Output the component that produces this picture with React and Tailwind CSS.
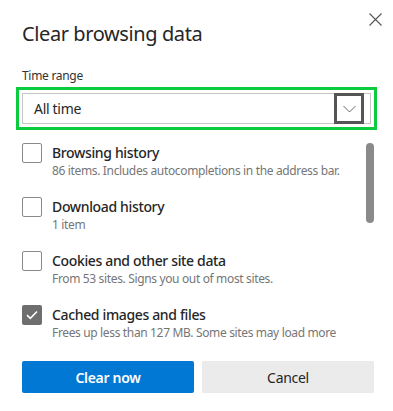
import React from "react";

const items = [
  { title: "Browsing history", sub: "86 items. Includes autocompletions in the address bar.", checked: false },
  { title: "Download history", sub: "1 item", checked: false },
  { title: "Cookies and other site data", sub: "From 53 sites. Signs you out of most sites.", checked: false },
  { title: "Cached images and files", sub: "Frees up less than 127 MB. Some sites may load more", checked: true },
];

export default function App() {
  return (
    <div
      className="relative w-[393px] h-[411px] bg-white overflow-hidden text-[#262626]"
      style={{ fontFamily: '"Noto Sans", "Open Sans", sans-serif' }}
    >
      <button className="absolute right-[8px] top-[9px] w-[20px] h-[20px] flex items-center justify-center">
        <svg width="13" height="13" viewBox="0 0 13 13" fill="none" stroke="#555" strokeWidth="1.1">
          <path d="M0.5 0.5 L12.5 12.5 M12.5 0.5 L0.5 12.5" />
        </svg>
      </button>

      <div className="px-[22px] pt-[20px]">
        <h1 className="text-[20px] leading-[28px] font-normal text-[#262626] tracking-[-0.4px]">Clear browsing data</h1>
        <div className="mt-[20px] text-[12px] leading-[16px] text-[#333] tracking-[-0.3px]">Time range</div>
      </div>

      <div className="mx-[16px] mt-[3px] h-[43px] border-[3px] border-[#0bcb3e] p-[3px]">
        <div className="h-full flex items-center justify-between border border-[#c6c6c6] bg-white pl-[11px]">
          <span className="text-[14px] text-[#262626] tracking-[-0.3px]">All time</span>
          <div className="w-[30px] h-[31px] -mt-[1px] -mb-[1px] mr-[6px] border-[3px] border-[#555] flex items-center justify-center">
            <svg width="13" height="8" viewBox="0 0 13 8" fill="none" stroke="#666" strokeWidth="1">
              <path d="M0.5 1 L6.5 7 L12.5 1" />
            </svg>
          </div>
        </div>
      </div>

      <div className="relative mt-[13px] px-[22px]">
        <div className="flex flex-col gap-[18px]">
          {items.map((it) => (
            <div key={it.title} className="flex gap-[10px]">
              {it.checked ? (
                <div className="w-[20px] h-[20px] rounded-[2px] bg-[#6e6e6e] flex items-center justify-center shrink-0">
                  <svg width="12" height="10" viewBox="0 0 12 10" fill="none" stroke="#fff" strokeWidth="1.6">
                    <path d="M1 5.2 L4.3 8.3 L11 1.5" />
                  </svg>
                </div>
              ) : (
                <div className="w-[20px] h-[20px] rounded-[2px] border border-[#8a8a8a] bg-white shrink-0" />
              )}
              <div className="flex flex-col">
                <div className="text-[14px] leading-[20px] font-medium text-[#262626] tracking-[-0.35px]">{it.title}</div>
                <div className="text-[12px] leading-[16px] text-[#767676] tracking-[-0.35px]">{it.sub}</div>
              </div>
            </div>
          ))}
        </div>
        <div className="absolute right-[19px] top-0 w-[8px] h-[80px] rounded-full bg-[#8a8a8a]" />
      </div>

      <div className="absolute left-[22px] right-[19px] top-[361px] flex gap-[8px]">
        <button className="flex-1 h-[32px] rounded-[2px] bg-[#0078d4] text-white text-[14px] font-semibold tracking-[-0.3px]">Clear now</button>
        <button className="flex-1 h-[32px] rounded-[2px] bg-[#ebebeb] text-[#262626] text-[14px] tracking-[-0.3px]">Cancel</button>
      </div>
    </div>
  );
}
